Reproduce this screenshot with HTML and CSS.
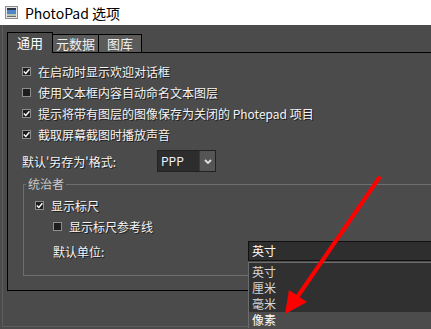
FILE: index.html
```html
<!DOCTYPE html>
<html lang="zh-CN">
<head>
    <meta charset="UTF-8">
    <meta name="viewport" content="width=device-width, initial-scale=1.0">
    <title>PhotoPad 选项</title>
    <link rel="stylesheet" href="styles.css">
</head>
<body>
    <div class="titlebar">
        <svg class="app-icon" width="13" height="13" viewBox="0 0 13 13">
            <rect x="0" y="0" width="13" height="13" fill="#8c8c8c"/>
            <rect x="1" y="1" width="11" height="11" fill="#e8e8e8"/>
            <rect x="2" y="2" width="9" height="2" fill="#2a3448"/>
            <rect x="2" y="4" width="9" height="4" fill="#4f86c8"/>
            <rect x="2" y="8" width="9" height="2" fill="#b8c4b0"/>
            <rect x="2" y="10" width="9" height="1" fill="#6a6a6a"/>
        </svg>
        <span class="title">PhotoPad 选项</span>
    </div>

    <div class="frame">
        <div class="tabs">
            <div class="tab active">通用</div>
            <div class="tab">元数据</div>
            <div class="tab">图库</div>
        </div>

        <div class="panel">
            <div class="row">
                <span class="box checked"><svg width="7" height="7" viewBox="0 0 7 7"><polyline points="0.8,3.4 2.8,5.4 6.4,1.2" fill="none" stroke="#fff" stroke-width="1.4"/></svg></span>
                在启动时显示欢迎对话框
            </div>
            <div class="row">
                <span class="box"></span>
                使用文本框内容自动命名文本图层
            </div>
            <div class="row">
                <span class="box checked"><svg width="7" height="7" viewBox="0 0 7 7"><polyline points="0.8,3.4 2.8,5.4 6.4,1.2" fill="none" stroke="#fff" stroke-width="1.4"/></svg></span>
                提示将带有图层的图像保存为关闭的 Photepad 项目
            </div>
            <div class="row">
                <span class="box checked"><svg width="7" height="7" viewBox="0 0 7 7"><polyline points="0.8,3.4 2.8,5.4 6.4,1.2" fill="none" stroke="#fff" stroke-width="1.4"/></svg></span>
                截取屏幕截图时播放声音
            </div>

            <div class="format-row">
                <span class="format-label">默认'另存为'格式:</span>
                <div class="combo">
                    <span class="combo-text">PPP</span>
                    <span class="combo-btn"><svg width="8" height="5" viewBox="0 0 8 5"><polyline points="1,1 4,4 7,1" fill="none" stroke="#e0e0e0" stroke-width="1.8"/></svg></span>
                </div>
            </div>

            <fieldset class="group">
                <legend>统治者</legend>
                <div class="row">
                    <span class="box checked"><svg width="7" height="7" viewBox="0 0 7 7"><polyline points="0.8,3.4 2.8,5.4 6.4,1.2" fill="none" stroke="#fff" stroke-width="1.4"/></svg></span>
                    显示标尺
                </div>
                <div class="row indent">
                    <span class="box"></span>
                    显示标尺参考线
                </div>
                <div class="unit-row">
                    <span class="unit-label">默认单位:</span>
                    <div class="unit-select">
                        英寸
                        <div class="dropdown">
                            <div class="option">英寸</div>
                            <div class="option">厘米</div>
                            <div class="option">毫米</div>
                            <div class="option selected">像素</div>
                        </div>
                    </div>
                </div>
            </fieldset>
        </div>
    </div>

    <svg class="arrow" width="431" height="329" viewBox="0 0 431 329">
        <line x1="379" y1="178" x2="298" y2="296" stroke="#ff0000" stroke-width="4" stroke-linecap="round"/>
        <polygon points="285,314 289,290 307,302" fill="#ff0000"/>
    </svg>
</body>
</html>
```

FILE: styles.css
```css
body {
    margin: 0;
    width: 431px;
    height: 329px;
    overflow: hidden;
    position: relative;
    background-color: #4b4b4b;
    font-family: "Noto Sans CJK SC", "Noto Sans", sans-serif;
    font-size: 12px;
    color: #f4f4f4;
}
.titlebar {
    height: 25px;
    background-color: #fff;
    display: flex;
    align-items: center;
}
.app-icon {
    margin-left: 5px;
    margin-right: 7px;
}
.title {
    font-size: 14px;
    color: #000;
}
.frame {
    margin-left: 2px;
    height: 302px;
    box-sizing: border-box;
    border-left: 1px solid #5e5e5e;
    border-bottom: 1px solid #5e5e5e;
    padding: 7px 0 0 4px;
}
.tabs {
    display: flex;
    align-items: flex-end;
    height: 20px;
}
.tab {
    height: 18px;
    box-sizing: border-box;
    border: 1px solid #000;
    border-bottom: none;
    background-color: #5b5b5b;
    text-align: center;
    font-size: 13px;
    line-height: 17px;
    width: 47px;
    margin-left: -1px;
    color: #f0f0f0;
}
.tab.active {
    height: 21px;
    margin-bottom: -1px;
    margin-left: 0;
    width: 46px;
    line-height: 20px;
    background-color: #4b4b4b;
    position: relative;
    z-index: 1;
    color: #fff;
}
.tab:last-child {
    width: 44px;
}
.panel {
    width: 424px;
    height: 239px;
    box-sizing: border-box;
    border: 1px solid #000;
    border-right: none;
    padding: 8px 0 0 14px;
}
.row {
    display: flex;
    align-items: center;
    height: 21px;
    text-shadow: 1px 1px 0 #1f1f1f;
}
.box {
    width: 9px;
    height: 9px;
    box-sizing: border-box;
    border: 1px solid #8e8e8e;
    background-color: #1e1e1e;
    margin-right: 7px;
    display: flex;
    align-items: center;
    justify-content: center;
}
.format-row {
    display: flex;
    align-items: center;
    margin-top: 5px;
    height: 22px;
    text-shadow: 1px 1px 0 #1f1f1f;
}
.format-label {
    width: 135px;
}
.combo {
    width: 59px;
    height: 22px;
    box-sizing: border-box;
    border: 1px solid #222;
    display: flex;
}
.combo-text {
    flex: 1;
    background-color: #2d2d2d;
    padding-left: 3px;
    line-height: 20px;
    color: #eef2ff;
    text-shadow: none;
}
.combo-btn {
    width: 15px;
    border-left: 1px solid #3a3a3a;
    background-color: #555;
    display: flex;
    align-items: center;
    justify-content: center;
}
.group {
    margin: 5px 0 0 1px;
    width: 408px;
    height: 99px;
    box-sizing: border-box;
    border: 1px solid #6e6e6e;
    border-right: none;
    padding: 4px 0 0 11px;
}
.group legend {
    padding: 0 2px;
    margin-left: -9px;
    line-height: 14px;
    color: #c8c8c8;
}
.indent {
    margin-left: 18px;
}
.unit-row {
    display: flex;
    align-items: center;
    margin: 4px 0 0 18px;
    height: 20px;
}
.unit-label {
    width: 195px;
    text-shadow: 1px 1px 0 #1f1f1f;
}
.unit-select {
    position: relative;
    width: 183px;
    height: 20px;
    box-sizing: border-box;
    border: 1px solid #111;
    border-right: none;
    background-color: #2e2e2e;
    padding-left: 3px;
    line-height: 18px;
    color: #fff;
}
.dropdown {
    position: absolute;
    top: 20px;
    left: -1px;
    width: 183px;
    box-sizing: border-box;
    border-top: 1px solid #6c6c6c;
    border-left: 1px solid #6c6c6c;
    background-color: #303030;
    padding-top: 1px;
    z-index: 2;
}
.option {
    height: 16px;
    line-height: 16px;
    padding-left: 3px;
    color: #d6d6d6;
}
.option.selected {
    background-color: #4c4c4c;
    color: #fff;
}
.arrow {
    position: absolute;
    top: 0;
    left: 0;
    z-index: 5;
    pointer-events: none;
}
```
